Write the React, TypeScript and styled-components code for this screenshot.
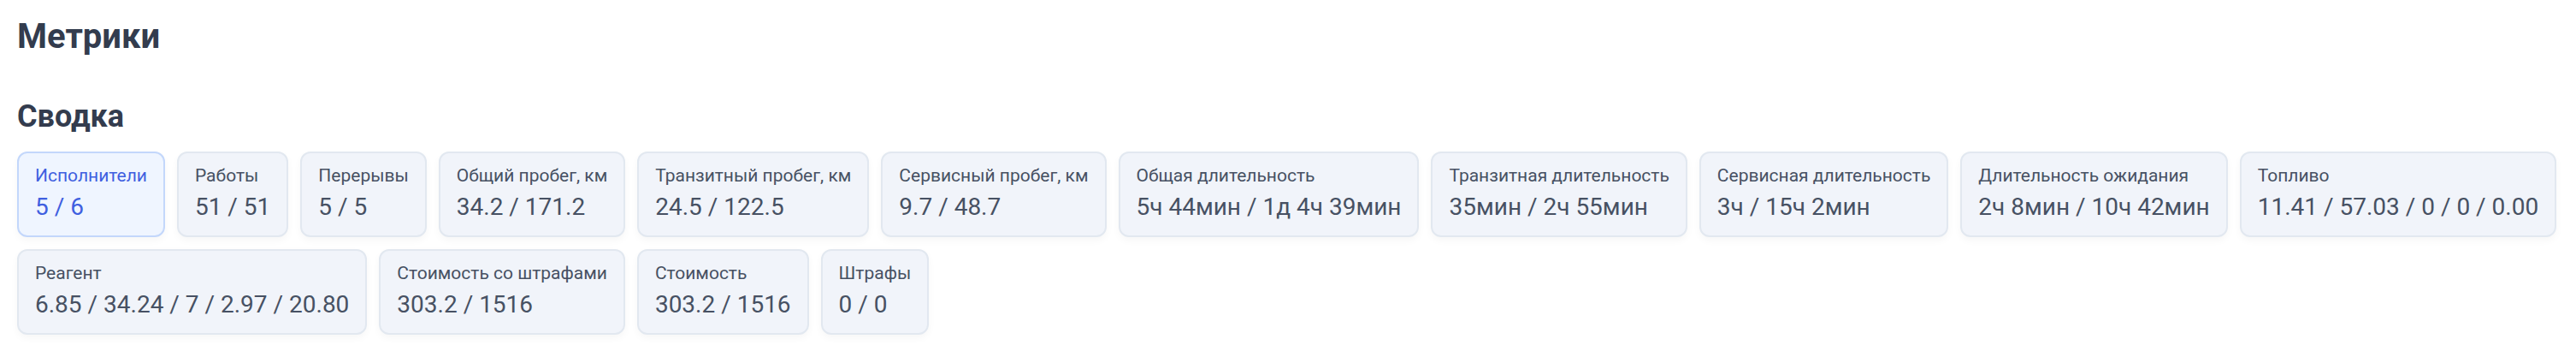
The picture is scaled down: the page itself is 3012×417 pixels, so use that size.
import React from "react";
import styled, { createGlobalStyle } from "styled-components";

const Global = createGlobalStyle`
  html, body { margin: 0; padding: 0; background: #ffffff; }
  body { font-family: Roboto, "Noto Sans", "Liberation Sans", sans-serif; }
`;

const Page = styled.div`
  padding: 19px 21px 20px 20px;
`;

const Title = styled.h1`
  margin: 0;
  font-size: 40px;
  line-height: 48px;
  font-weight: 700;
  color: #333c4e;
`;

const Section = styled.section`
  margin-top: 48px;
`;

const SectionTitle = styled.h2`
  margin: 0;
  font-size: 36px;
  line-height: 43px;
  font-weight: 700;
  color: #333c4e;
`;

const Grid = styled.div`
  margin-top: 19px;
  display: flex;
  flex-wrap: wrap;
  gap: 14px 14px;
`;

const Card = styled.div<{ $active?: boolean }>`
  display: flex;
  flex-direction: column;
  gap: 5px;
  box-sizing: border-box;
  height: 100px;
  padding: 13px 19px 14px 19px;
  border-radius: 12px;
  border: 2px solid ${(p) => (p.$active ? "#c3d7fb" : "#e2e8f0")};
  background: ${(p) => (p.$active ? "#eff5ff" : "#f1f4fa")};
  box-shadow: 0 4px 10px rgba(15, 23, 42, 0.035);
  color: ${(p) => (p.$active ? "#3f5fe0" : "#475163")};
`;

const Label = styled.div`
  font-size: 21px;
  line-height: 27px;
  font-weight: 400;
  white-space: nowrap;
`;

const Value = styled.div`
  font-size: 28px;
  line-height: 36px;
  font-weight: 400;
  white-space: nowrap;
`;

type Metric = { label: string; value: string; active?: boolean };

const metrics: Metric[] = [
  { label: "Исполнители", value: "5 / 6", active: true },
  { label: "Работы", value: "51 / 51" },
  { label: "Перерывы", value: "5 / 5" },
  { label: "Общий пробег, км", value: "34.2 / 171.2" },
  { label: "Транзитный пробег, км", value: "24.5 / 122.5" },
  { label: "Сервисный пробег, км", value: "9.7 / 48.7" },
  { label: "Общая длительность", value: "5ч 44мин / 1д 4ч 39мин" },
  { label: "Транзитная длительность", value: "35мин / 2ч 55мин" },
  { label: "Сервисная длительность", value: "3ч / 15ч 2мин" },
  { label: "Длительность ожидания", value: "2ч 8мин / 10ч 42мин" },
  { label: "Топливо", value: "11.41 / 57.03 / 0 / 0 / 0.00" },
  { label: "Реагент", value: "6.85 / 34.24 / 7 / 2.97 / 20.80" },
  { label: "Стоимость со штрафами", value: "303.2 / 1516" },
  { label: "Стоимость", value: "303.2 / 1516" },
  { label: "Штрафы", value: "0 / 0" },
];

export default function App() {
  return (
    <>
      <Global />
      <Page>
        <Title>Метрики</Title>
        <Section>
          <SectionTitle>Сводка</SectionTitle>
          <Grid>
            {metrics.map((m) => (
              <Card key={m.label} $active={m.active}>
                <Label>{m.label}</Label>
                <Value>{m.value}</Value>
              </Card>
            ))}
          </Grid>
        </Section>
      </Page>
    </>
  );
}
